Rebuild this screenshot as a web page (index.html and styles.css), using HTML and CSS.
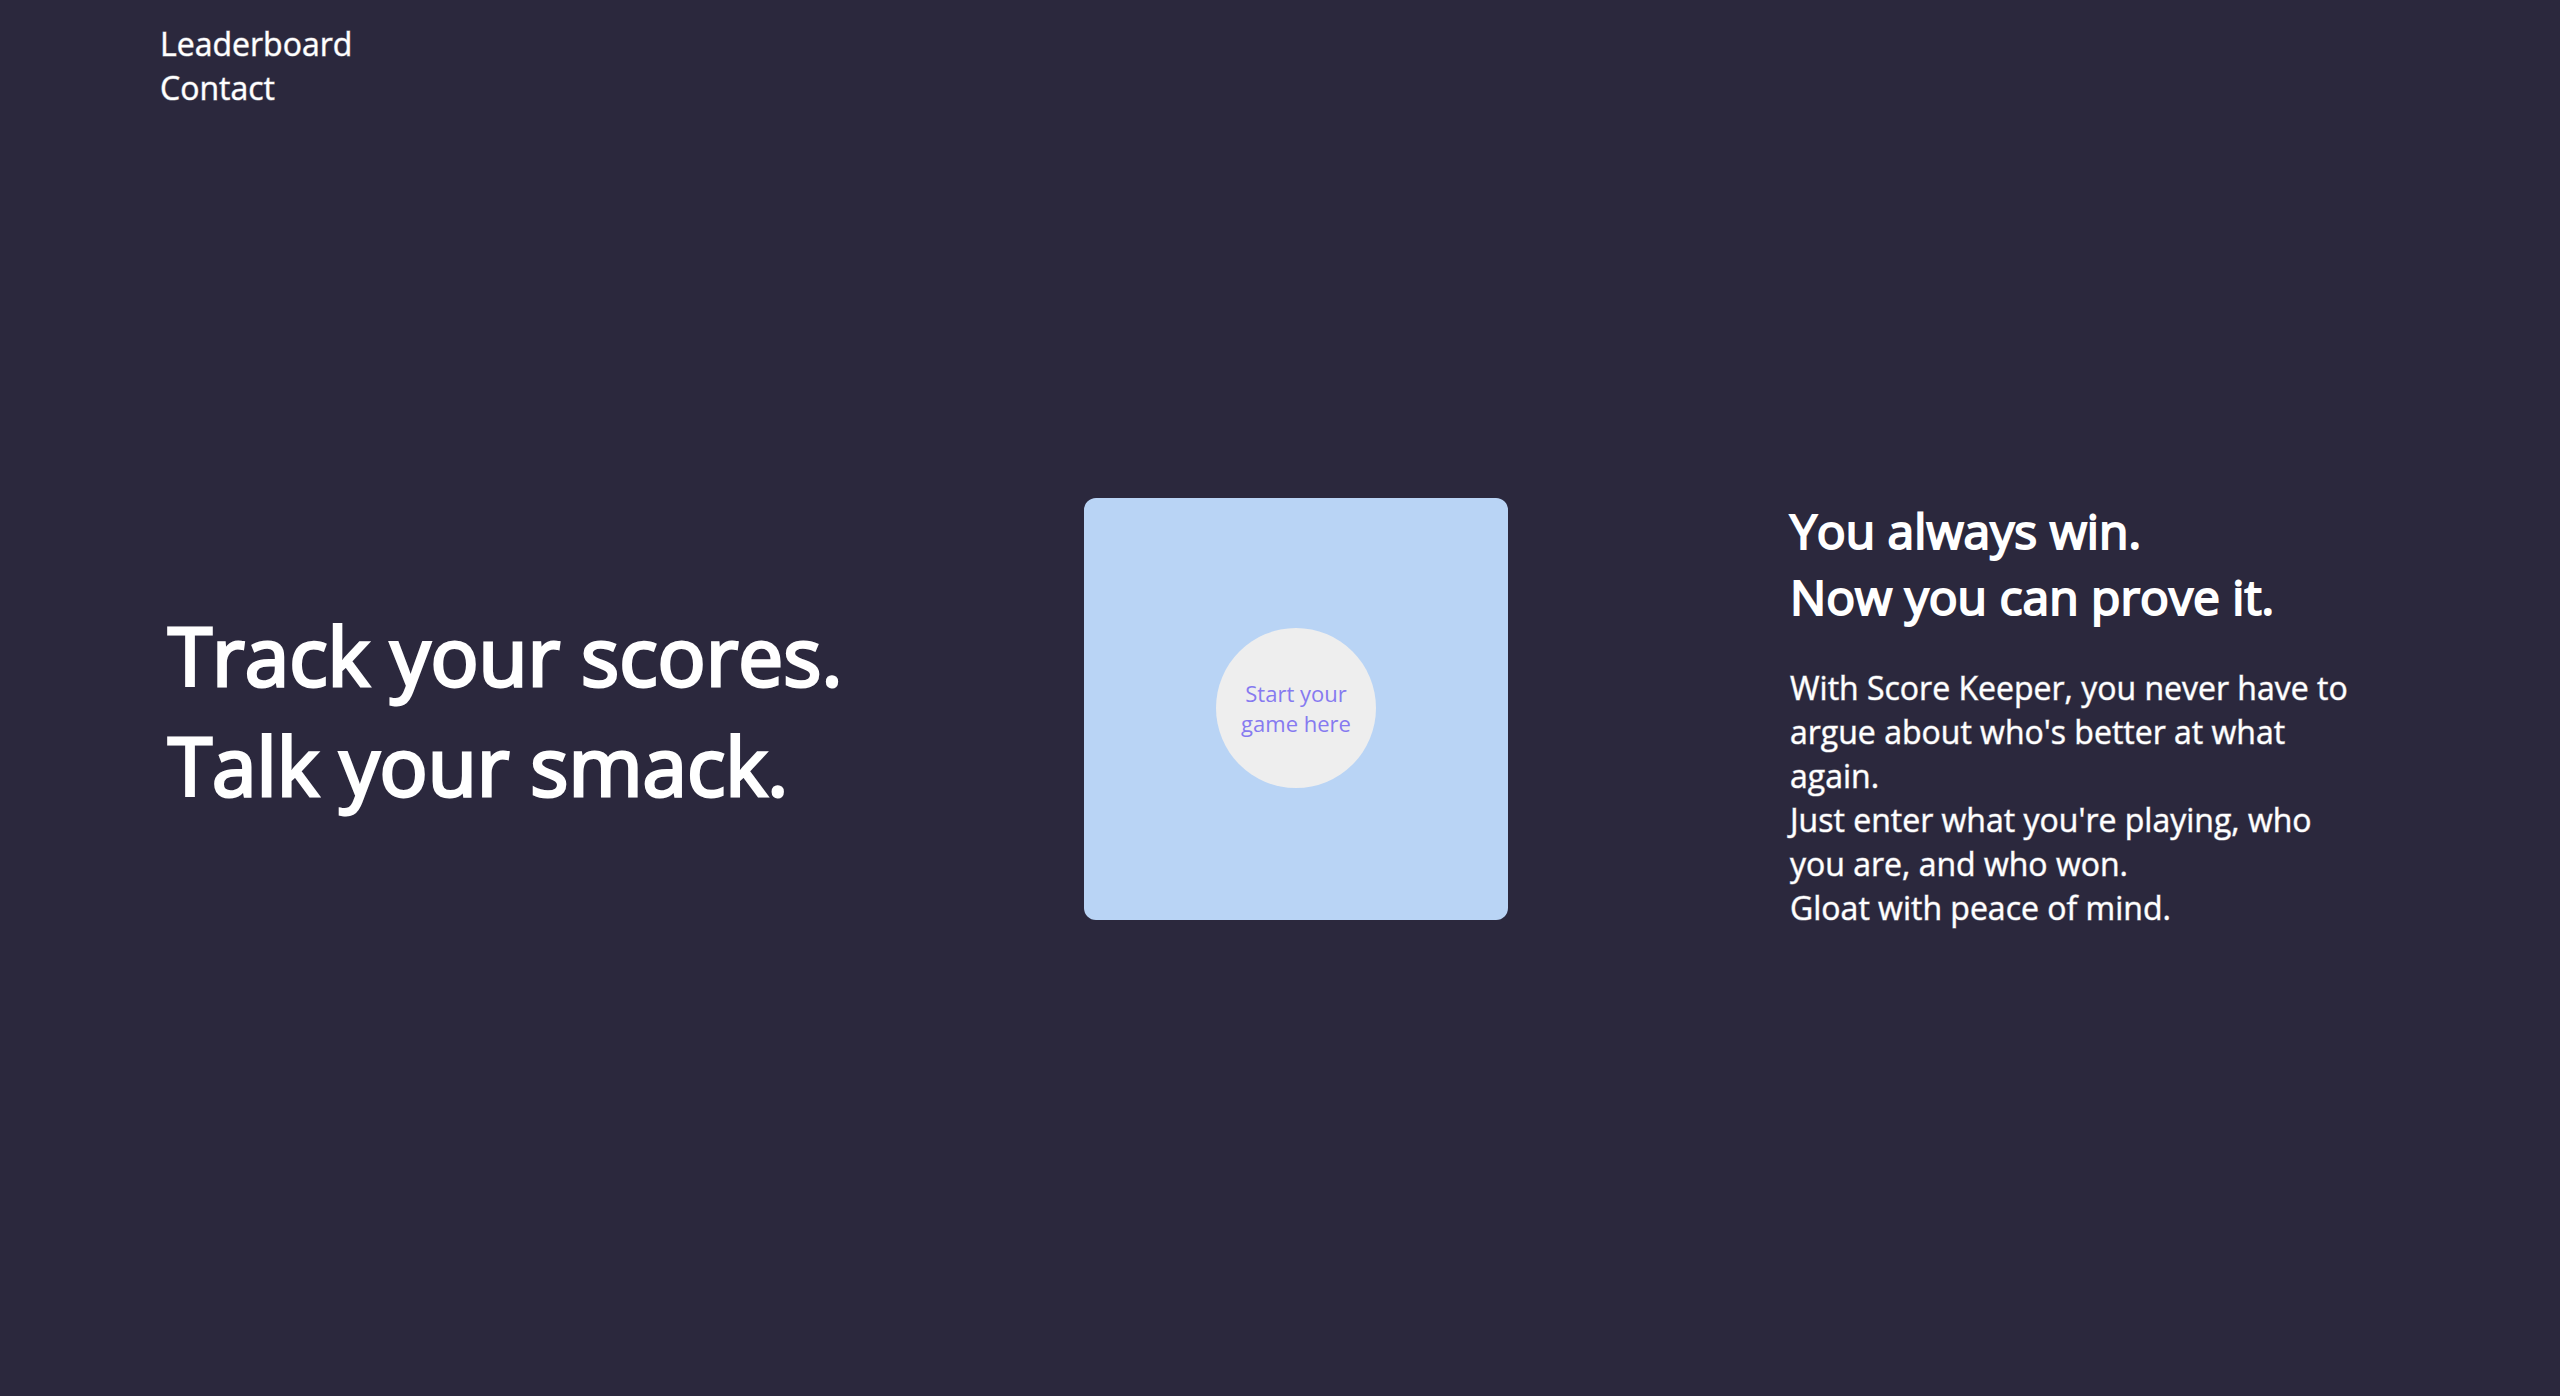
FILE: index.html
```html
<!DOCTYPE html>
<html lang="en">
<head>
  <meta charset="utf-8">
  <title>Score Keeper</title>
  <link rel="stylesheet" href="styles.css">
</head>
<body>
  <nav class="nav">
    <a class="nav-link" href="#leaderboard">Leaderboard</a>
    <a class="nav-link" href="#contact">Contact</a>
  </nav>
  <main class="hero">
    <h1 class="headline">Track your scores.<br>Talk your smack.</h1>
    <div class="card">
      <button class="start" type="button">Start your game here</button>
    </div>
    <section class="pitch">
      <h2 class="pitch-title">You always win.<br>Now you can prove it.</h2>
      <p class="pitch-text">With Score Keeper, you never have to argue about who's better at what again.<br>Just enter what you're playing, who you are, and who won.<br>Gloat with peace of mind.</p>
    </section>
  </main>
</body>
</html>
```
FILE: styles.css
```css
* {
  box-sizing: border-box;
}

body {
  margin: 0;
  min-height: 100vh;
  display: flex;
  flex-direction: column;
  background: #2b283d;
  color: #fff;
  font: 400 32px/44px "Open Sans", sans-serif;
}

.nav {
  display: flex;
  flex-direction: column;
  align-items: flex-start;
  padding: 22px 160px;
}

.nav-link {
  color: inherit;
  text-decoration: none;
}

.nav-link,
.pitch-text {
  -webkit-text-stroke: 1px rgb(255 255 255 / 50%);
}

.hero {
  flex: 1;
  display: grid;
  grid-template-columns: 916fr 424px 282fr 570fr;
  align-items: center;
  padding: 0 200px 110px 168px;
}

.headline,
.pitch-title {
  margin: 0;
  font-weight: 400;
}

.headline {
  padding-top: 2px;
  font-size: 80px;
  line-height: 110px;
  -webkit-text-stroke: 3px #fff;
}

.card {
  display: flex;
  align-items: center;
  justify-content: center;
  height: 422px;
  padding-bottom: 2px;
  border-radius: 12px;
  background: #b9d4f5;
}

.start {
  width: 160px;
  height: 160px;
  padding: 0 20px;
  border: 0;
  border-radius: 50%;
  background: #eee;
  color: #867af0;
  font: 400 22px/30px "Open Sans", sans-serif;
  cursor: pointer;
}

.pitch {
  grid-column: 4;
  padding-top: 10px;
}

.pitch-title {
  font-size: 48px;
  line-height: 66px;
  -webkit-text-stroke: 2px #fff;
}

.pitch-text {
  margin: 36px 0 0;
}
```
